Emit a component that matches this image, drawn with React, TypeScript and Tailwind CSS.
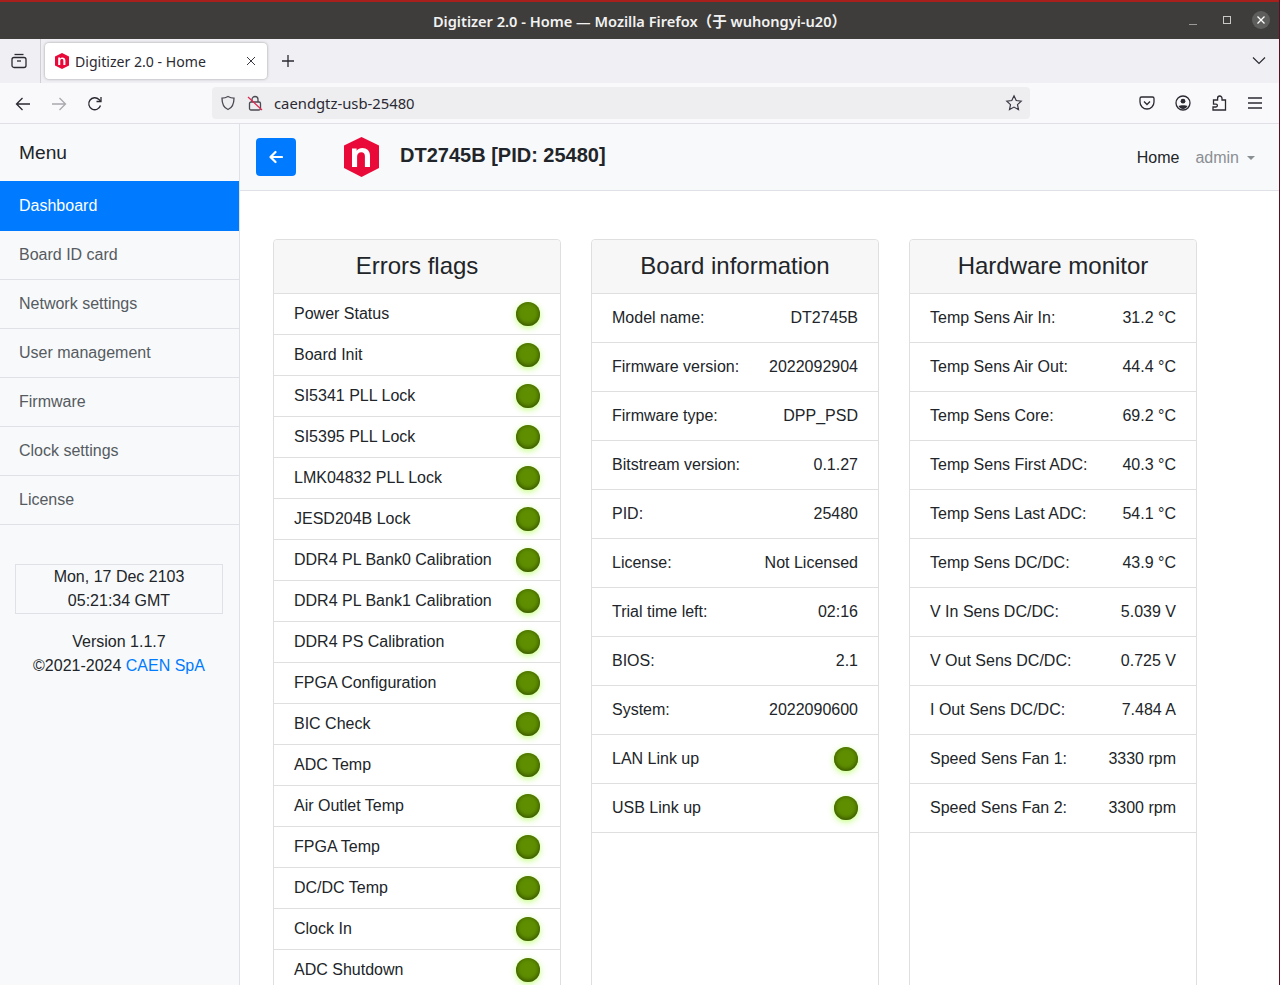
import React from 'react';

const menuItems = ['Board ID card', 'Network settings', 'User management', 'Firmware', 'Clock settings', 'License'];

const errorFlags = [
  'Power Status',
  'Board Init',
  'SI5341 PLL Lock',
  'SI5395 PLL Lock',
  'LMK04832 PLL Lock',
  'JESD204B Lock',
  'DDR4 PL Bank0 Calibration',
  'DDR4 PL Bank1 Calibration',
  'DDR4 PS Calibration',
  'FPGA Configuration',
  'BIC Check',
  'ADC Temp',
  'Air Outlet Temp',
  'FPGA Temp',
  'DC/DC Temp',
  'Clock In',
  'ADC Shutdown',
];

const boardInfo = [
  ['Model name:', 'DT2745B'],
  ['Firmware version:', '2022092904'],
  ['Firmware type:', 'DPP_PSD'],
  ['Bitstream version:', '0.1.27'],
  ['PID:', '25480'],
  ['License:', 'Not Licensed'],
  ['Trial time left:', '02:16'],
  ['BIOS:', '2.1'],
  ['System:', '2022090600'],
];

const hardware = [
  ['Temp Sens Air In:', '31.2 °C'],
  ['Temp Sens Air Out:', '44.4 °C'],
  ['Temp Sens Core:', '69.2 °C'],
  ['Temp Sens First ADC:', '40.3 °C'],
  ['Temp Sens Last ADC:', '54.1 °C'],
  ['Temp Sens DC/DC:', '43.9 °C'],
  ['V In Sens DC/DC:', '5.039 V'],
  ['V Out Sens DC/DC:', '0.725 V'],
  ['I Out Sens DC/DC:', '7.484 A'],
  ['Speed Sens Fan 1:', '3330 rpm'],
  ['Speed Sens Fan 2:', '3300 rpm'],
];

function Led() {
  return (
    <span className="block w-6 h-6 rounded-full bg-[#5f8f00] shadow-[inset_0_-1px_5px_#304701,0_2px_6px_rgba(137,255,0,0.5)]" />
  );
}

function Logo({ width, height }: { width: number; height: number }) {
  return (
    <svg width={width} height={height} viewBox="0 0 35 40">
      <path d="M17.500 0L35 8.500v22.500L17.500 40 0 31V8.500z" fill="#ea0a3a" />
      <path d="M8 30V11.500h4.600v2.300c1.500-1.800 3.400-2.800 5.600-2.800 4.700 0 7.800 2.800 7.800 7.800V30h-5.100V19.300c0-2.700-1.300-4.100-3.600-4.100-2.500 0-4.200 1.600-4.200 4.400V30z" fill="#fff" />
    </svg>
  );
}

function Card({ title, children }: { title: string; children: React.ReactNode }) {
  return (
    <div className="w-[288px] h-[800px] shrink-0 bg-white border border-[#dfdfdf] rounded-[4px]">
      <div className="h-[54px] pb-[2px] bg-[#f7f7f7] border-b border-[#dfdfdf] rounded-t-[4px] flex items-center justify-center text-[24px] text-[#212529]">
        {title}
      </div>
      {children}
    </div>
  );
}

function InfoRow({ label, children }: { label: string; children: React.ReactNode }) {
  return (
    <div className="h-[49px] border-b border-[#dfdfdf] pl-5 pr-5 flex items-center justify-between text-[#212529]">
      <span>{label}</span>
      <span>{children}</span>
    </div>
  );
}

function BrowserChrome() {
  return (
    <div className="shrink-0 font-['Noto_Sans',sans-serif]">
      {/* title bar */}
      <div className="h-[39px] bg-[#3e3d3b] border-t-2 border-[#a8201c] relative flex items-center justify-center text-[14.600px] font-semibold text-[#f2f2f2]">
        <span className="font-['Noto_Sans','Noto_Sans_CJK_SC',sans-serif]">Digitizer 2.0 - Home — Mozilla Firefox（于 wuhongyi-u20）</span>
        <div className="absolute right-[9px] top-[9px] flex items-center">
          <svg width="12" height="12" viewBox="0 0 12 12" className="mr-[22px]">
            <path d="M2 10.500h8" stroke="#9a9a98" strokeWidth="1" />
          </svg>
          <svg width="12" height="12" viewBox="0 0 12 12" className="mr-[19px]">
            <rect x="2.500" y="2.500" width="7" height="7" fill="none" stroke="#c8c8c6" strokeWidth="1" />
          </svg>
          <div className="w-[18px] h-[18px] rounded-full bg-[#5e5e5c] flex items-center justify-center">
            <svg width="10" height="10" viewBox="0 0 10 10">
              <path d="M1.500 1.500l7 7M8.500 1.500l-7 7" stroke="#fff" strokeWidth="1.300" />
            </svg>
          </div>
        </div>
      </div>

      {/* tab bar */}
      <div className="h-[44px] bg-[#f0f0f4] flex items-center relative">
        <div className="w-[41px] h-full pr-[3px] border-r border-[#cfcfd4] flex items-center justify-center">
          <svg width="18" height="18" viewBox="0 0 18 18" fill="none" stroke="#2b2a33" strokeWidth="1.300">
            <path d="M4.500 2.500h9" />
            <rect x="2" y="5.500" width="14" height="10" rx="2" />
            <path d="M7 9h4" />
          </svg>
        </div>
        <div className="ml-[4px] w-[222px] h-[36px] bg-white rounded-[4px] shadow-[0_0_3px_rgba(0,0,0,0.35)] flex items-center pl-[10px] pr-[11px] text-[14.100px] text-[#2b2a33]">
          <Logo width={14} height={16} />
          <span className="ml-[6px] flex-1 mt-[1px]">Digitizer 2.0 - Home</span>
          <svg width="10" height="10" viewBox="0 0 10 10">
            <path d="M1 1l8 8M9 1l-8 8" stroke="#3a3944" strokeWidth="1" />
          </svg>
        </div>
        <svg width="14" height="14" viewBox="0 0 14 14" className="ml-[14px]">
          <path d="M7 1v12M1 7h12" stroke="#2b2a33" strokeWidth="1.300" />
        </svg>
        <svg width="14" height="10" viewBox="0 0 14 10" className="absolute right-[13px] top-[17px]">
          <path d="M1 1.500l6 6 6-6" fill="none" stroke="#2b2a33" strokeWidth="1.200" />
        </svg>
      </div>

      {/* nav bar */}
      <div className="h-[41px] bg-[#f9f9fb] border-b border-[#e0e0e6] flex items-center relative">
        <svg width="16" height="16" viewBox="0 0 16 16" className="ml-[15px] mt-[1px]" fill="none" stroke="#2b2a33" strokeWidth="1.300">
          <path d="M15 8H1.500M7.500 2l-6 6 6 6" />
        </svg>
        <svg width="16" height="16" viewBox="0 0 16 16" className="ml-[20px] mt-[1px]" fill="none" stroke="#a9a9ae" strokeWidth="1.300">
          <path d="M1 8h13.500M8.500 2l6 6-6 6" />
        </svg>
        <svg width="16" height="16" viewBox="0 0 16 16" className="ml-[20px] mt-[1px]" fill="none" stroke="#2b2a33" strokeWidth="1.300">
          <path d="M13.500 9.500A6 6 0 1 1 12 3.500l1.500 1.500" />
          <path d="M14 1v4.500H9.500" />
        </svg>
        <div className="ml-[109px] w-[818px] h-[32px] bg-[#eeeef1] rounded-[4px] flex items-center pl-[8px] pr-[7px] text-[14.800px] text-[#2b2a33]">
          <svg width="16" height="16" viewBox="0 0 16 16" fill="none" stroke="#4a4a52" strokeWidth="1.300">
            <path d="M8 1.500c2 1.200 4 1.700 6 1.700 0 5.500-1.500 9.500-6 11.300C3.500 12.700 2 8.700 2 3.200c2 0 4-.5 6-1.700z" />
          </svg>
          <svg width="16" height="16" viewBox="0 0 16 16" className="ml-[11px]" fill="none" strokeWidth="1.300">
            <rect x="2.500" y="7" width="11" height="8" rx="1.500" stroke="#4a4a52" />
            <path d="M5 7V4.500a3 3 0 0 1 6 0V7" stroke="#4a4a52" />
            <path d="M1 2l14 13" stroke="#e22850" />
          </svg>
          <span className="ml-[11px] flex-1">caendgtz-usb-25480</span>
          <svg width="18" height="18" viewBox="0 0 18 18" fill="none" stroke="#3a3944" strokeWidth="1.200">
            <path d="M9 1.800l2.200 4.700 5 .6-3.700 3.500 1 5L9 13.100l-4.500 2.500 1-5L1.800 7.100l5-.6z" />
          </svg>
        </div>
        <svg width="16" height="16" viewBox="0 0 16 16" className="ml-[109px]" fill="none" stroke="#2b2a33" strokeWidth="1.300">
          <path d="M2.500 2h11A1.500 1.500 0 0 1 15 3.500V7a7 7 0 0 1-14 0V3.500A1.500 1.500 0 0 1 2.500 2z" />
          <path d="M5 6.500l3 3 3-3" />
        </svg>
        <svg width="16" height="16" viewBox="0 0 16 16" className="ml-[20px]">
          <circle cx="8" cy="8" r="7" fill="none" stroke="#2b2a33" strokeWidth="1.300" />
          <circle cx="8" cy="6.200" r="2.400" fill="#2b2a33" />
          <path d="M3.500 11c1.500-1 7.500-1 9 0-1 2-2.500 3-4.500 3s-3.500-1-4.500-3z" fill="#2b2a33" />
        </svg>
        <svg width="16" height="16" viewBox="0 0 16 16" className="ml-[20px]" fill="none" stroke="#2b2a33" strokeWidth="1.300">
          <path d="M2 15h12.500V5H11V3.200a2.200 2.200 0 0 0-4.400 0V5H2.500v4.200H5a1.400 1.400 0 0 1 0 2.800H2z" />
        </svg>
        <svg width="14" height="12" viewBox="0 0 14 12" className="ml-[21px]" stroke="#2b2a33" strokeWidth="1.300">
          <path d="M0 1h14M0 6h14M0 11h14" />
        </svg>
      </div>
    </div>
  );
}

export default function App() {
  return (
    <div className="w-[1280px] h-[985px] overflow-hidden flex flex-col bg-white border-r border-[#5a1020] font-['Liberation_Sans',sans-serif] text-[16px] leading-[24px]">
      <BrowserChrome />
      <div className="flex flex-1 min-h-0">
        {/* sidebar */}
        <aside className="w-[240px] shrink-0 bg-[#f8f9fa] border-r border-[#dee2e6] text-[#555b61]">
          <div className="h-[57px] pl-[19px] flex items-center text-[19.200px] text-[#212529]">Menu</div>
          <div className="h-[50px] pl-[19px] flex items-center bg-[#007bff] text-white">Dashboard</div>
          {menuItems.map((item) => (
            <div key={item} className="h-[49px] pl-[19px] flex items-center border-b border-[#dee2e6]">
              {item}
            </div>
          ))}
          <div className="mt-[39px] ml-[15px] mr-[16px] h-[50px] border border-[#dee2e6] text-center text-[#212529]">
            <div>Mon, 17 Dec 2103</div>
            <div>05:21:34 GMT</div>
          </div>
          <div className="mt-[16px] pr-[1px] text-center text-[#212529]">
            <div>Version 1.1.7</div>
            <div>
              ©2021-2024 <span className="text-[#007bff]">CAEN SpA</span>
            </div>
          </div>
        </aside>

        <main className="flex-1 min-w-0">
          {/* header */}
          <div className="h-[67px] bg-[#f8f9fa] border-b border-[#dee2e6] flex items-center pl-4 pr-[24px]">
            <div className="w-10 h-[38px] bg-[#007bff] rounded-[4px] flex items-center justify-center">
              <svg width="14" height="14" viewBox="0 0 14 14" fill="none" stroke="#fff" strokeWidth="2.200" strokeLinecap="round" strokeLinejoin="round">
                <path d="M13 7H2M6.500 2L1.500 7l5 5" />
              </svg>
            </div>
            <div className="ml-[48px] -mt-[1px]">
              <Logo width={35} height={40} />
            </div>
            <div className="ml-[21px] -mt-[5px] text-[20px] font-bold text-[#212529]">DT2745B [PID: 25480]</div>
            <div className="ml-auto mt-[1px] text-[#212529]">Home</div>
            <div className="ml-4 mt-[1px] text-[#8a8f94] flex items-center">
              admin
              <span className="ml-[8px] border-t-[4px] border-x-[4px] border-x-transparent border-t-[#8a8f94]" />
            </div>
          </div>

          {/* cards */}
          <div className="flex gap-[30px] pl-[33px] pt-[48px]">
            <Card title="Errors flags">
              {errorFlags.map((flag) => (
                <div key={flag} className="h-[41px] border-b border-[#dfdfdf] pl-5 pr-5 flex items-center justify-between text-[#212529]">
                  <span>{flag}</span>
                  <Led />
                </div>
              ))}
            </Card>
            <Card title="Board information">
              {boardInfo.map(([label, value]) => (
                <InfoRow key={label} label={label}>{value}</InfoRow>
              ))}
              <InfoRow label="LAN Link up"><Led /></InfoRow>
              <InfoRow label="USB Link up"><Led /></InfoRow>
            </Card>
            <Card title="Hardware monitor">
              {hardware.map(([label, value]) => (
                <InfoRow key={label} label={label}>{value}</InfoRow>
              ))}
            </Card>
          </div>
        </main>
      </div>
    </div>
  );
}
